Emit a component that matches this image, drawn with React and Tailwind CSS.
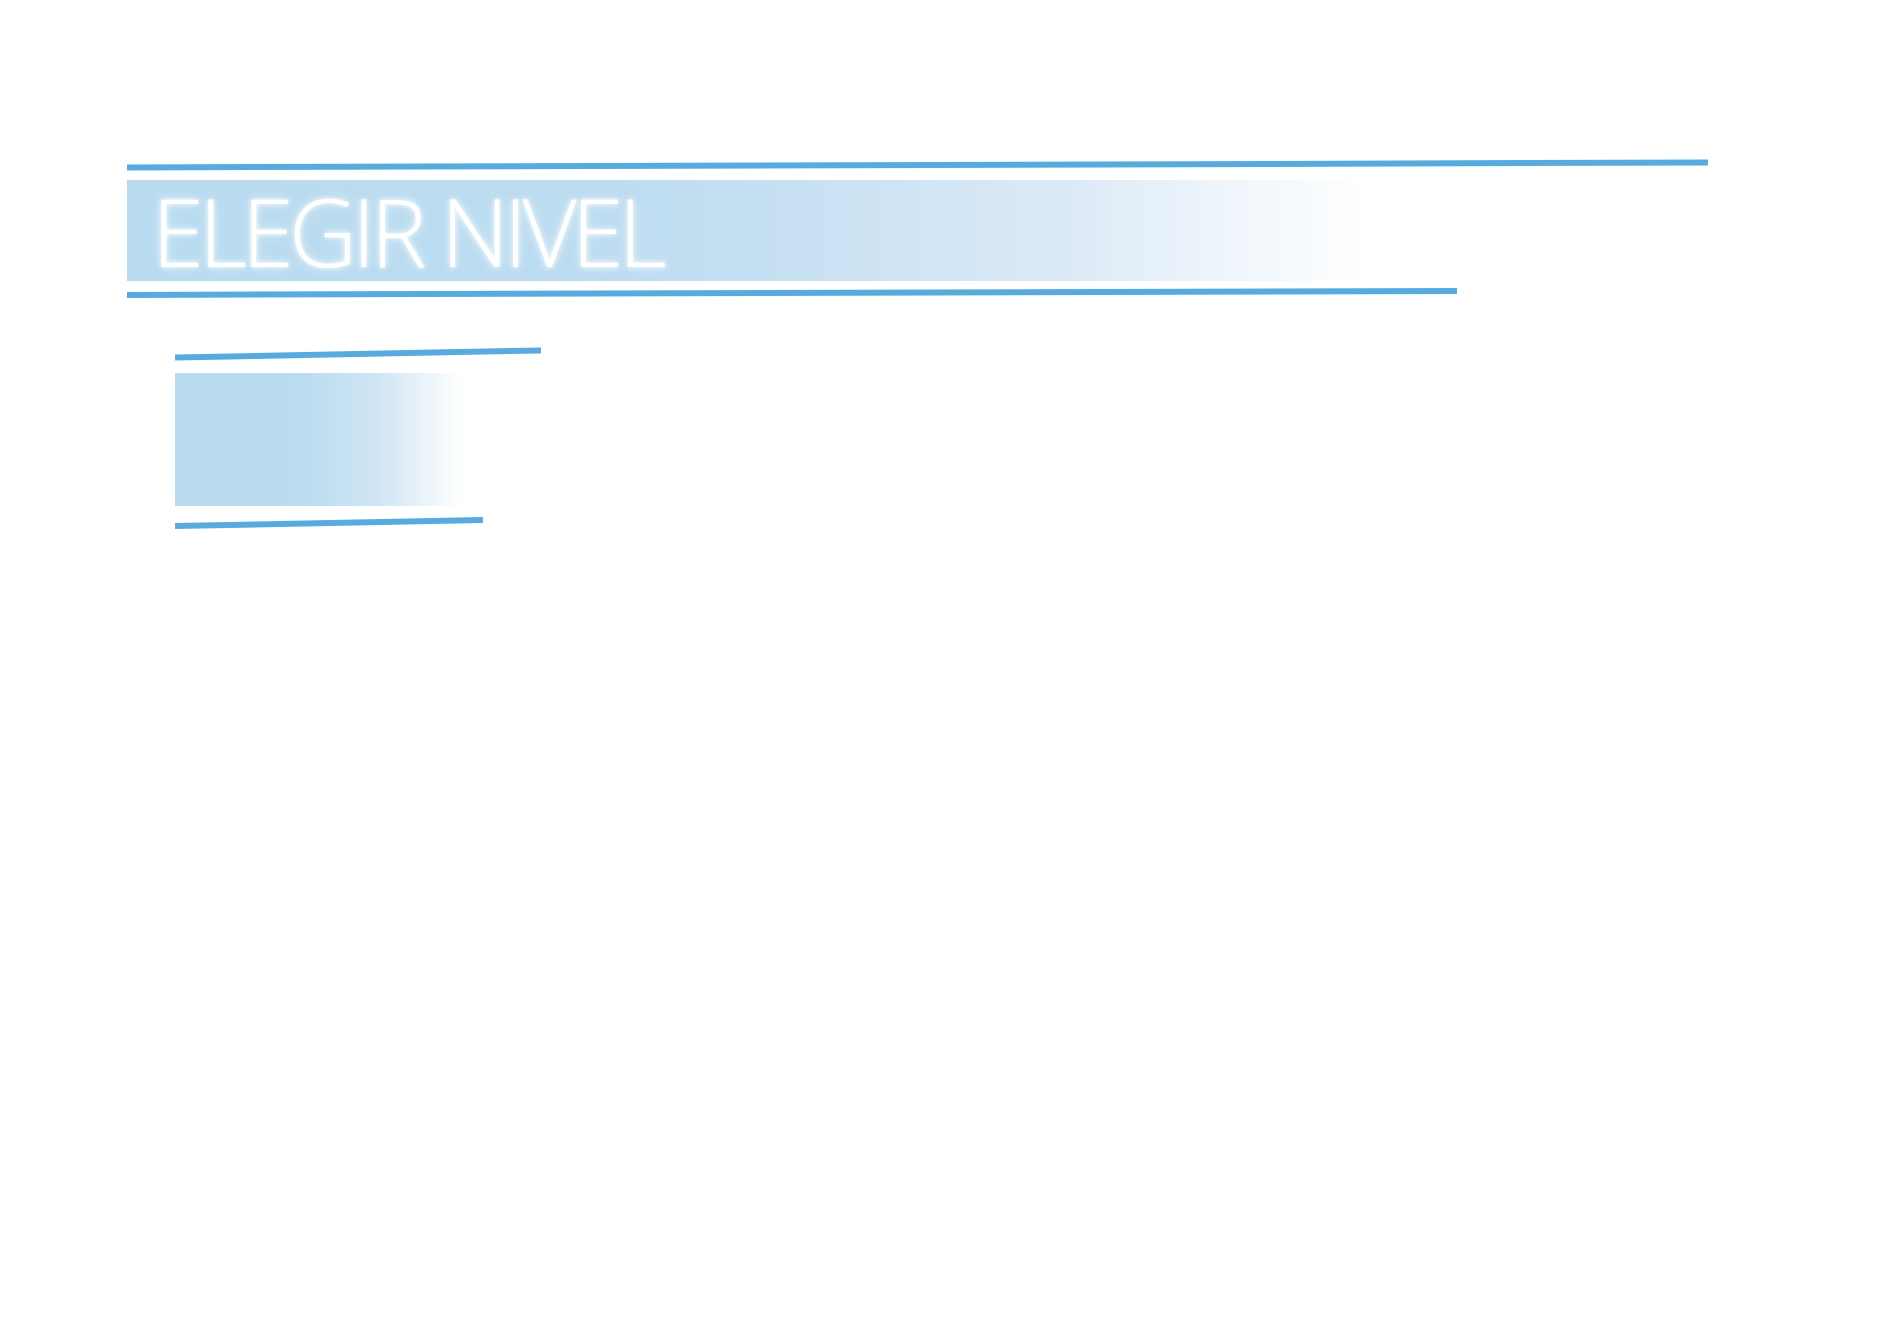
export default function App() {
  return (
    <div className="min-h-screen w-full bg-white pt-[162px] pl-[127px]">
      {/* Header */}
      <div className="w-[1581px] h-[6px] bg-[#5aabdd] -rotate-[0.18deg]" />
      <div className="mt-[12px] w-[1240px] h-[101px] flex items-center pl-[25px] bg-[linear-gradient(to_right,#b8dbf0_0%,#bcdcf0_38%,#c8e1f3_55%,#dceaf6_76%,#f6fafd_94%,#ffffff_100%)]">
        <h1
          className="text-white text-[94px] leading-none font-light tracking-[-5px] [text-shadow:0_0_5px_#ffffff,0_0_12px_rgba(255,255,255,0.6)]"
          style={{ fontFamily: '"Open Sans", "Noto Sans", sans-serif' }}
        >
          ELEGIR NIVEL
        </h1>
      </div>
      <div className="mt-[9px] w-[1330px] h-[6px] bg-[#5aabdd] -rotate-[0.17deg]" />

      {/* Level card */}
      <div className="ml-[48px] mt-[55px]">
        <div className="w-[366px] h-[6px] bg-[#5aabdd] -rotate-[1.1deg]" />
        <div className="mt-[16px] w-[288px] h-[133px] bg-[linear-gradient(to_right,#b8dbf0_0%,#b9dcf0_42%,#cfe5f4_70%,#ffffff_100%)]" />
        <div className="mt-[14px] w-[308px] h-[6px] bg-[#5aabdd] -rotate-[1.12deg]" />
      </div>
    </div>
  );
}
